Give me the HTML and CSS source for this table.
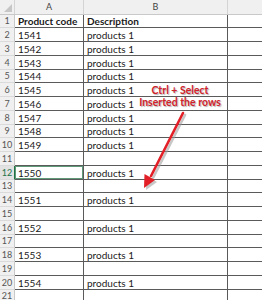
FILE: index.html
```html
<!DOCTYPE html>
<html>
<head>
<meta charset="utf-8">
<link rel="stylesheet" href="styles.css">
</head>
<body>
<div class="sheet">
  <div class="row colhead">
    <div class="corner"><span class="tri"></span></div>
    <div class="ch">A</div>
    <div class="ch">B</div>
    <div class="ch last"></div>
  </div>
  <div class="row"><div class="rh">1</div><div class="c b">Product code</div><div class="c b">Description</div><div class="c x"></div></div>
  <div class="row"><div class="rh">2</div><div class="c">1541</div><div class="c">products 1</div><div class="c x"></div></div>
  <div class="row"><div class="rh">3</div><div class="c">1542</div><div class="c">products 1</div><div class="c x"></div></div>
  <div class="row"><div class="rh">4</div><div class="c">1543</div><div class="c">products 1</div><div class="c x"></div></div>
  <div class="row"><div class="rh">5</div><div class="c">1544</div><div class="c">products 1</div><div class="c x"></div></div>
  <div class="row"><div class="rh">6</div><div class="c">1545</div><div class="c">products 1</div><div class="c x"></div></div>
  <div class="row"><div class="rh">7</div><div class="c">1546</div><div class="c">products 1</div><div class="c x"></div></div>
  <div class="row"><div class="rh">8</div><div class="c">1547</div><div class="c">products 1</div><div class="c x"></div></div>
  <div class="row"><div class="rh">9</div><div class="c">1548</div><div class="c">products 1</div><div class="c x"></div></div>
  <div class="row"><div class="rh">10</div><div class="c">1549</div><div class="c">products 1</div><div class="c x"></div></div>
  <div class="row"><div class="rh">11</div><div class="c"></div><div class="c"></div><div class="c x"></div></div>
  <div class="row"><div class="rh sel">12</div><div class="c active">1550</div><div class="c">products 1</div><div class="c x"></div></div>
  <div class="row"><div class="rh">13</div><div class="c"></div><div class="c"></div><div class="c x"></div></div>
  <div class="row"><div class="rh">14</div><div class="c">1551</div><div class="c">products 1</div><div class="c x"></div></div>
  <div class="row"><div class="rh">15</div><div class="c"></div><div class="c"></div><div class="c x"></div></div>
  <div class="row"><div class="rh">16</div><div class="c">1552</div><div class="c">products 1</div><div class="c x"></div></div>
  <div class="row"><div class="rh">17</div><div class="c"></div><div class="c"></div><div class="c x"></div></div>
  <div class="row"><div class="rh">18</div><div class="c">1553</div><div class="c">products 1</div><div class="c x"></div></div>
  <div class="row"><div class="rh">19</div><div class="c"></div><div class="c"></div><div class="c x"></div></div>
  <div class="row"><div class="rh">20</div><div class="c">1554</div><div class="c">products 1</div><div class="c x"></div></div>
  <div class="row"><div class="rh">21</div><div class="c nb"></div><div class="c nb"></div><div class="c x nb"></div></div>

  <div class="note">
    <div>Ctrl + Select</div>
    <div>Inserted the rows</div>
  </div>
  <svg class="arrow" width="262" height="300" viewBox="0 0 262 300">
    <g fill="#9a9a9a" stroke="#9a9a9a" opacity="0.55" transform="translate(2,2)">
      <line x1="183" y1="113" x2="151" y2="176" stroke-width="2.6" stroke-linecap="round"/>
      <polygon points="144,188 155,180 144.5,174" stroke="none"/>
    </g>
    <g fill="#e21f26" stroke="#e21f26">
      <line x1="183" y1="113" x2="151" y2="176" stroke-width="2.6" stroke-linecap="round"/>
      <polygon points="144,188 155,180 144.5,174" stroke="none"/>
    </g>
  </svg>
</div>
</body>
</html>
```
FILE: styles.css
```css
html, body {
  margin: 0;
  padding: 0;
  background: #ffffff;
}
.sheet {
  position: relative;
  width: 262px;
  height: 300px;
  overflow: hidden;
  font-family: Lato, "Open Sans", sans-serif;
  font-size: 10px;
  color: #1a1a1a;
}
.row {
  display: grid;
  grid-template-columns: 15px 69px 144px 34px;
  height: 13.75px;
}
.colhead {
  height: 14.5px;
  background: #f0f0f0;
  border-bottom: 1px solid #c9c9c9;
  box-sizing: border-box;
}
.corner {
  position: relative;
  border-right: 1px solid #d4d4d4;
}
.tri {
  position: absolute;
  right: 2px;
  bottom: 2px;
  width: 0;
  height: 0;
  border-left: 8px solid transparent;
  border-bottom: 8px solid #c6c6c6;
}
.ch {
  display: flex;
  align-items: center;
  justify-content: center;
  color: #444;
  font-size: 9px;
  border-right: 1px solid #d4d4d4;
}
.ch.last {
  border-right: none;
}
.rh {
  display: flex;
  align-items: center;
  justify-content: center;
  background: #f0f0f0;
  color: #555;
  font-size: 9px;
  border-right: 1px solid #c9c9c9;
  border-bottom: 1px solid #dadada;
  box-sizing: border-box;
}
.rh.sel {
  background: #e2e2e2;
  color: #217346;
  border-right: 1px solid #217346;
}
.c {
  display: flex;
  align-items: center;
  padding: 1px 0 0 3px;
  box-sizing: border-box;
  border-right: 1px solid #5a5a5a;
  border-bottom: 1px solid #5a5a5a;
  white-space: nowrap;
  overflow: hidden;
}
.c.x {
  border-right: none;
}
.c.nb {
  border-bottom: none;
}
.c.b {
  font-weight: bold;
}
.c.active {
  box-shadow: inset 0 0 0 1px #5f9a78;
}
.note {
  position: absolute;
  left: 121px;
  top: 84px;
  width: 118px;
  text-align: center;
  color: #d0232b;
  font-weight: bold;
  font-size: 10.5px;
  line-height: 12px;
  text-shadow: 1px 1px 1px rgba(0, 0, 0, 0.3);
}
.arrow {
  position: absolute;
  left: 0;
  top: 0;
}
```
